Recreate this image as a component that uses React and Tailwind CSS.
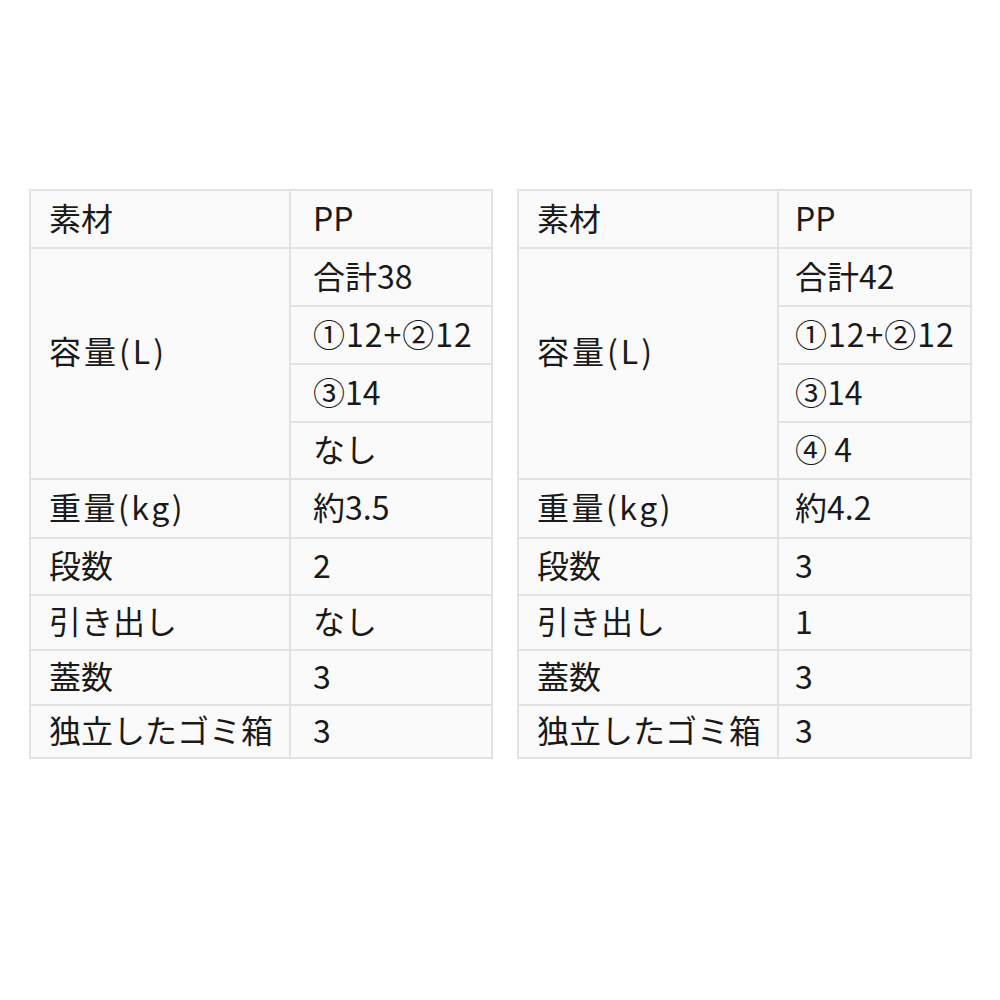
import React from "react";

const Cell = ({ children, className = "" }) => (
  <div className={`bg-[#fafafa] flex items-center whitespace-nowrap ${className}`}>{children}</div>
);

function SpecTable({ cols, valuePad, data }) {
  const v = `${valuePad} pb-[5px]`;
  const l = "pl-[18px] pb-[5px]";
  return (
    <div
      className={`grid ${cols} grid-rows-[56px_56px_56px_56px_55px_57px_55px_53px_53px_51px] gap-[2px] p-[2px] bg-[#e2e2e2]`}
    >
      <Cell className={l}>素材</Cell>
      <Cell className={v}>PP</Cell>
      <Cell className="pl-[18px] pb-[28px] row-span-4 tracking-[3px]">容量(L)</Cell>
      <Cell className={v}>{data.total}</Cell>
      <Cell className={`${v} tracking-[1px]`}>①12+②12</Cell>
      <Cell className={v}>③14</Cell>
      <Cell className={v}>{data.fourth}</Cell>
      <Cell className={`${l} tracking-[2.5px]`}>重量(kg)</Cell>
      <Cell className={v}>{data.weight}</Cell>
      <Cell className={l}>段数</Cell>
      <Cell className={v}>{data.tiers}</Cell>
      <Cell className={l}>引き出し</Cell>
      <Cell className={v}>{data.drawer}</Cell>
      <Cell className={l}>蓋数</Cell>
      <Cell className={v}>3</Cell>
      <Cell className={l}>独立したゴミ箱</Cell>
      <Cell className={v}>3</Cell>
    </div>
  );
}

export default function App() {
  return (
    <div
      className="w-[1000px] h-[1000px] bg-white text-[#1a1a1a] text-[32px] leading-none"
      style={{ fontFamily: '"Noto Sans CJK JP", "Noto Sans", sans-serif' }}
    >
      <div className="flex gap-[24px] pt-[189px] pl-[29px]">
        <SpecTable
          cols="grid-cols-[258px_200px]"
          valuePad="pl-[22px]"
          data={{ total: "合計38", fourth: "なし", weight: "約3.5", tiers: "2", drawer: "なし" }}
        />
        <SpecTable
          cols="grid-cols-[258px_191px]"
          valuePad="pl-[16px]"
          data={{ total: "合計42", fourth: "④ 4", weight: "約4.2", tiers: "3", drawer: "1" }}
        />
      </div>
    </div>
  );
}
